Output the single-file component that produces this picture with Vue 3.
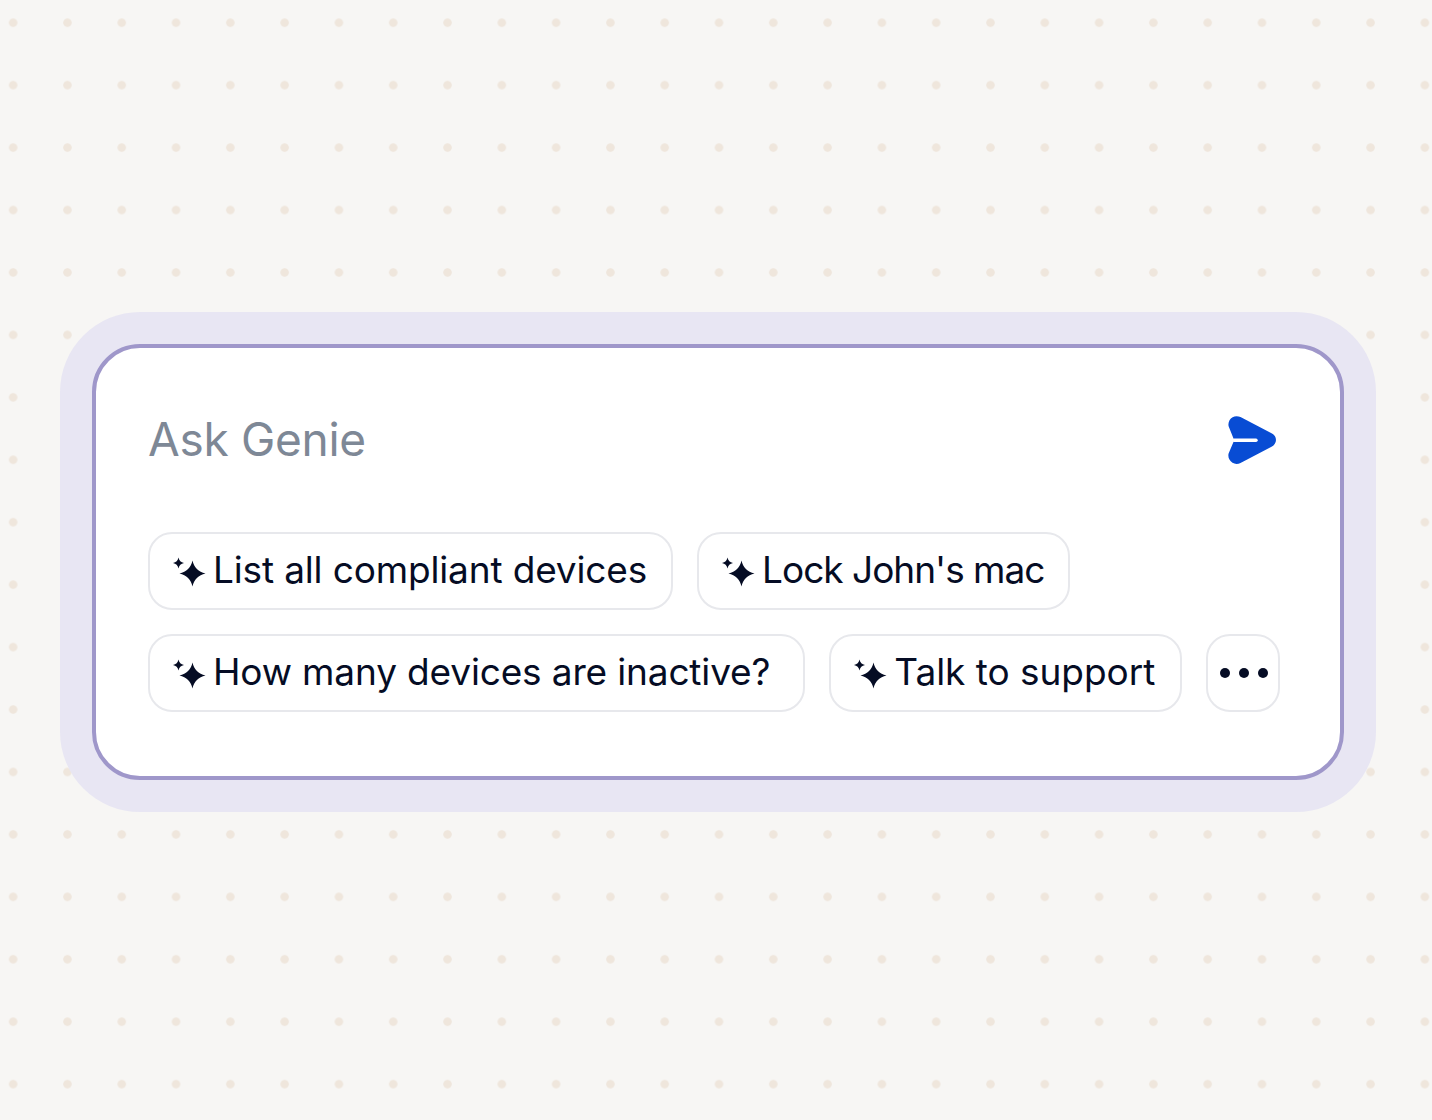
<script setup>
const chips = [
  { label: 'List all compliant devices' },
  { label: "Lock John's mac", cls: 'tight' },
  { label: 'How many devices are inactive?', cls: 'long' },
  { label: 'Talk to support', cls: 'loose' }
]
</script>

<template>
  <div class="page">
    <div class="halo">
      <div class="card">
        <div class="ask">
          <span class="placeholder">Ask Genie</span>
          <button class="send" aria-label="Send">
            <svg width="48" height="48" viewBox="0 0 48 48">
              <path fill="#084cd4" d="M4.6 1.2C7 -.2 10 0 12.5 1L44 17.6c5.3 2.9 5.3 9.900 0 12.800L12.500 47C10 48.200 6.800 48.300 4.500 46.800 1.300 44.700-.3 41.200.6 37.500L6.200 24.300 .7 10.600C-.3 7 1.400 3.100 4.600 1.200Z" />
              <path stroke="#fff" stroke-width="3.400" stroke-linecap="round" d="M6 24.300H28" fill="none" />
            </svg>
          </button>
        </div>
        <div class="chips">
          <button v-for="chip in chips" :key="chip.label" class="chip" :class="chip.cls">
            <svg class="sparkle" width="34" height="32" viewBox="0 0 34 32">
              <path fill="#050c24" d="M20.500 5.500C22 12.500 26.500 17 33.500 18.500 26.500 20 22 24.500 20.500 31.500 19 24.500 14.500 20 7.500 18.500 14.500 17 19 12.500 20.500 5.500Z" />
              <path fill="#050c24" d="M6.500 2.500C7 5.500 9 7.500 12 8 9 8.500 7 10.500 6.500 13.500 6 10.500 4 8.500 1 8 4 7.500 6 5.500 6.500 2.500Z" />
            </svg>
            <span class="label">{{ chip.label }}</span>
          </button>
          <button class="chip more" aria-label="More">
            <i></i><i></i><i></i>
          </button>
        </div>
      </div>
    </div>
  </div>
</template>

<style>
html, body {
  margin: 0;
}
</style>

<style scoped>
.page {
  box-sizing: border-box;
  height: 1120px;
  padding: 312px 56px 0 60px;
  background-color: #f7f6f4;
  background-image: radial-gradient(circle, #efe6dc 3.800px, transparent 4.600px);
  background-size: 54.300px 62.450px;
  background-position: -14px -8.500px;
  font-family: Inter, "Liberation Sans", sans-serif;
}

.halo {
  padding: 32px;
  border-radius: 80px;
  background: #e8e6f3;
}

.card {
  box-sizing: border-box;
  height: 436px;
  padding: 52px 56px 0 52px;
  border: 4px solid #9f97ca;
  border-radius: 48px;
  background: #fff;
}

.ask {
  display: flex;
  align-items: center;
  justify-content: space-between;
  height: 80px;
  margin: 0 8px 52px 0;
}

.placeholder {
  padding-bottom: 2px;
  font-size: 46px;
  color: #7e8896;
  letter-spacing: -0.3px;
}

.send {
  display: flex;
  padding: 0;
  border: 0;
  background: none;
}

.chips {
  display: flex;
  flex-wrap: wrap;
  gap: 24px;
}

.chip {
  box-sizing: border-box;
  display: flex;
  align-items: center;
  height: 78px;
  padding: 0 24px;
  border: 2px solid #e7e8ec;
  border-radius: 24px;
  background: #fff;
  color: #050c24;
  font-family: inherit;
  font-size: 37px;
  letter-spacing: -0.15px;
}

.tight {
  letter-spacing: -1px;
}

.loose {
  padding-right: 25px;
  letter-spacing: -0.03px;
}

.long {
  padding-right: 33px;
}

.sparkle {
  flex: none;
  margin-right: 7px;
  margin-left: -2px;
}

.label {
  padding-bottom: 3px;
}

.more {
  width: 74px;
  padding: 0 0 0 2px;
  justify-content: center;
  gap: 9px;
}

.more i {
  width: 10px;
  height: 10px;
  border-radius: 50%;
  background: #050c24;
}
</style>
